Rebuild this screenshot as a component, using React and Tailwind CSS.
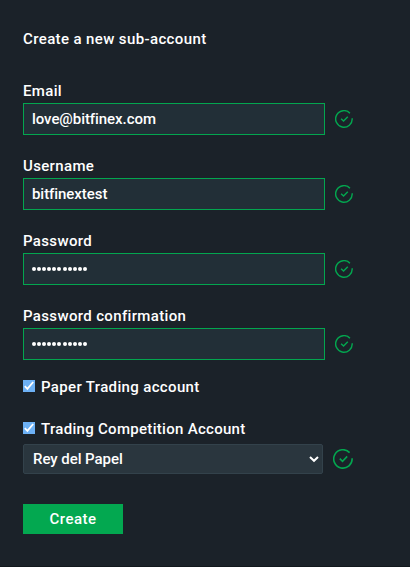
import { useState } from "react";

function ValidIcon({ size = 18 }) {
  return (
    <svg width={size} height={size} viewBox="0 0 20 20" fill="none" stroke="#03a64f" strokeWidth="1.6" className="shrink-0">
      <path d="M19.1 9.2A9.2 9.2 0 1 1 16.6 3.6" />
      <path d="M6.8 9.6L9.5 12.3L14.2 7.4" strokeWidth="1.6" />
    </svg>
  );
}

function Field({ label, type = "text", value, onChange }) {
  return (
    <div className="mb-[21px]">
      <label className="block h-5 leading-5 mb-0.5">{label}</label>
      <div className="flex items-center">
        {type === "password" ? (
          <div className="flex items-center gap-[1.1px] w-[302px] h-8 px-2 pb-px mr-2.5 bg-[#222f37] border border-[#03a64f]">
            {value.split("").map((_, i) => (
              <span key={i} className="w-1 h-1 rounded-full bg-white" />
            ))}
          </div>
        ) : (
          <input
            type={type}
            value={value}
            onChange={onChange}
            className="w-[302px] h-8 px-2 mr-2.5 tracking-[-0.06px] [font-variant-ligatures:common-ligatures] bg-[#222f37] border border-[#03a64f] focus:outline-none"
          />
        )}
        <ValidIcon />
      </div>
    </div>
  );
}

function Checkbox({ label, checked, onClick }) {
  return (
    <div onClick={onClick} className="flex items-center h-5 cursor-pointer">
      <span className="w-3 h-3 mr-1.5 mb-0.5 bg-[#6db1f5]">
        {checked && (
          <svg width="12" height="12" viewBox="0 0 12 12" fill="none" stroke="white" strokeWidth="1.8">
            <path d="M1.8 6.2L4.4 8.9L10.2 2" />
          </svg>
        )}
      </span>
      {label}
    </div>
  );
}

export default function App() {
  const [email, setEmail] = useState("love@bitfinex.com");
  const [username, setUsername] = useState("bitfinextest");
  const [paper, setPaper] = useState(true);
  const [competition, setCompetition] = useState(true);

  return (
    <div className="min-h-screen bg-[#1b2229] border-b border-[#12181d] pl-[23px] pt-[29px] text-white font-['Roboto',sans-serif] font-medium text-[15px] tracking-[0.35px]">
      <h1 className="h-5 leading-5 mb-8 tracking-[0.38px]">Create a new sub-account</h1>

      <Field label="Email" value={email} onChange={(e) => setEmail(e.target.value)} />
      <Field label="Username" value={username} onChange={(e) => setUsername(e.target.value)} />
      <Field label="Password" type="password" value="bitfinex123" />
      <Field label="Password confirmation" type="password" value="bitfinex123" />

      <div className="-mt-1 mb-[22px]">
        <Checkbox label="Paper Trading account" checked={paper} onClick={() => setPaper(!paper)} />
      </div>
      <div className="tracking-[0.3px]">
        <Checkbox label="Trading Competition Account" checked={competition} onClick={() => setCompetition(!competition)} />
      </div>

      <div className="flex items-center mt-[5px]">
        <button className="flex items-center justify-between w-[300px] h-[30px] pl-[9px] pr-[3px] mr-2.5 bg-[#2a363e] border border-[#33424b] rounded-xs tracking-[-0.05px]">
          Rey del Papel
          <svg width="10" height="8" viewBox="0 0 10 8" fill="none" stroke="white" strokeWidth="2">
            <path d="M1 2L5 5.8L9 2" />
          </svg>
        </button>
        <ValidIcon size={20} />
      </div>

      <button className="block w-[100px] h-[30px] mt-[30px] bg-[#03a850] tracking-[0.5px]">Create</button>
    </div>
  );
}
